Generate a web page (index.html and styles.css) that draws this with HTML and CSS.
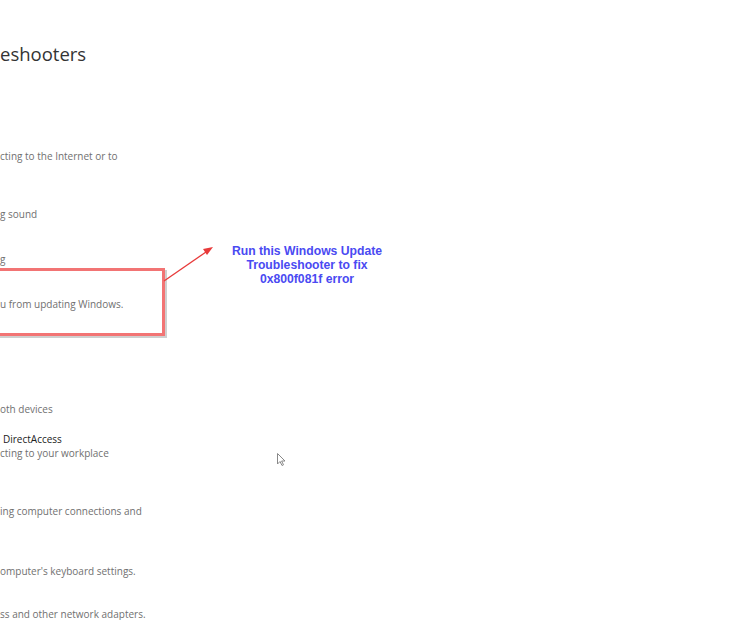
FILE: index.html
```html
<!DOCTYPE html>
<html lang="en">
<head>
    <meta charset="UTF-8">
    <title>Troubleshooters</title>
    <link rel="stylesheet" href="styles.css">
</head>
<body>
    <div class="page">
        <h1 class="title">eshooters</h1>

        <p class="desc gap-xl">cting to the Internet or to</p>
        <p class="desc gap-l">g sound</p>
        <p class="desc gap-m">g</p>
        <p class="desc gap-m">u from updating Windows.</p>

        <p class="desc gap-xxl">oth devices</p>
        <p class="name gap-s">DirectAccess</p>
        <p class="desc">cting to your workplace</p>
        <p class="desc gap-l">ing computer connections and</p>
        <p class="desc gap-l2">omputer's keyboard settings.</p>
        <p class="desc last gap-m2">ss and other network adapters.</p>

        <!-- annotation over the Windows Update item -->
        <div class="highlight"></div>
        <svg class="pointer" width="740" height="620" viewBox="0 0 740 620">
            <line x1="164" y1="281" x2="206" y2="252" stroke="#e83a3a" stroke-width="1.3"/>
            <polygon points="213,247 203,249 207,255" fill="#e83a3a"/>
        </svg>
        <div class="callout">Run this Windows Update<br>Troubleshooter to fix<br>0x800f081f error</div>

        <svg class="cursor" width="12" height="16" viewBox="0 0 12 16">
            <path d="M1.5 1.5 L1.5 12 L4 9.5 L6 13.5 L7.5 12.8 L5.6 9 L9 9 Z" fill="#fff" stroke="#888" stroke-width="1"/>
        </svg>
    </div>
</body>
</html>
```

FILE: styles.css
```css
* {
    margin: 0;
    padding: 0;
    box-sizing: border-box;
}

body {
    background: #fff;
    width: 740px;
    height: 620px;
    overflow: hidden;
    font-family: 'Open Sans', 'Noto Sans', sans-serif;
}

.page {
    position: relative;
    height: 620px;
    padding-top: 40px;
}

.title {
    font-size: 18.5px;
    font-weight: 400;
    line-height: 28px;
    height: 28px;
    color: #333;
}

.desc,
.name {
    font-size: 10px;
    line-height: 14px;
    height: 14px;
    white-space: nowrap;
    color: #707070;
}

.name {
    color: #222;
    padding-left: 3px;
}

/* last row sits right at the window's bottom edge */
.desc.last {
    line-height: 12px;
    height: 12px;
}

.gap-s { margin-top: 16px; }
.gap-m { margin-top: 31px; }
.gap-m2 { margin-top: 30px; }
.gap-l { margin-top: 44px; }
.gap-l2 { margin-top: 46px; }
.gap-xl { margin-top: 81px; }
.gap-xxl { margin-top: 91px; }

.highlight {
    position: absolute;
    left: -10px;
    top: 268px;
    width: 175px;
    height: 68px;
    border: 3px solid #f27474;
    box-shadow: 2px 2px 0 #cfcfcf;
}

.pointer {
    position: absolute;
    left: 0;
    top: 0;
}

.callout {
    position: absolute;
    left: 207px;
    top: 244px;
    width: 200px;
    text-align: center;
    font-family: 'Liberation Sans', Arial, sans-serif;
    font-weight: bold;
    font-size: 12.2px;
    line-height: 14px;
    color: #4a4af2;
}

.cursor {
    position: absolute;
    left: 276px;
    top: 452px;
}
```
